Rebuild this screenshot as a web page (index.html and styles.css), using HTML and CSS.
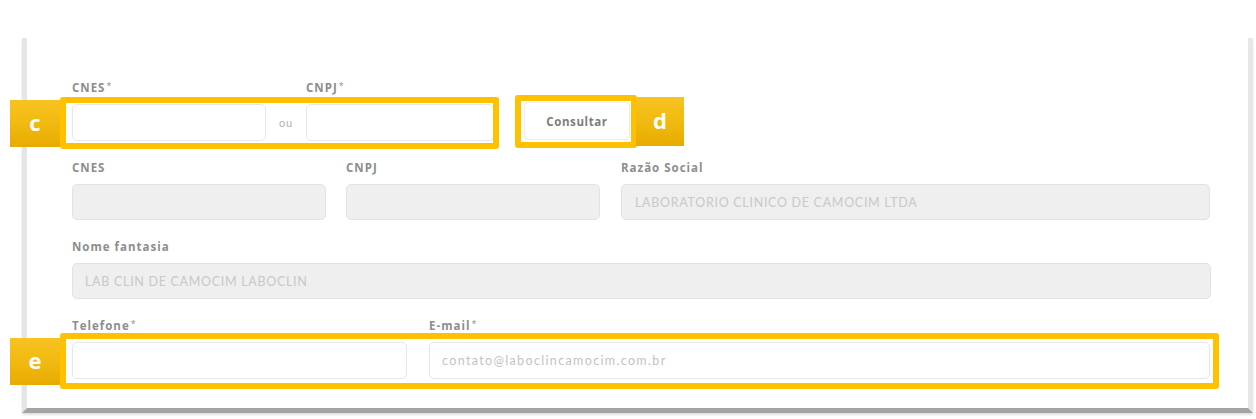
FILE: index.html
```html
<!DOCTYPE html>
<html lang="pt-BR">
<head>
<meta charset="utf-8">
<title>Cadastro</title>
<link rel="stylesheet" href="styles.css">
</head>
<body>
<div class="page">
  <div class="card">
    <div class="row row-search">
      <div class="field f-cnes1">
        <label class="label">CNES<sup class="req">*</sup></label>
        <div class="input"></div>
      </div>
      <span class="ou">ou</span>
      <div class="field f-cnpj1">
        <label class="label">CNPJ<sup class="req">*</sup></label>
        <div class="input"></div>
      </div>
      <button class="btn">Consultar</button>
    </div>
    <div class="row row-three">
      <div class="field">
        <label class="label">CNES</label>
        <div class="input disabled"></div>
      </div>
      <div class="field">
        <label class="label">CNPJ</label>
        <div class="input disabled"></div>
      </div>
      <div class="field">
        <label class="label">Razão Social</label>
        <div class="input disabled"><span class="value">LABORATORIO CLINICO DE CAMOCIM LTDA</span></div>
      </div>
    </div>
    <div class="row">
      <div class="field full">
        <label class="label">Nome fantasia</label>
        <div class="input disabled"><span class="value">LAB CLIN DE CAMOCIM LABOCLIN</span></div>
      </div>
    </div>
    <div class="row row-contact">
      <div class="field">
        <label class="label">Telefone<sup class="req">*</sup></label>
        <div class="input"></div>
      </div>
      <div class="field">
        <label class="label">E-mail<sup class="req">*</sup></label>
        <div class="input"><span class="placeholder">contato@laboclincamocim.com.br</span></div>
      </div>
    </div>
  </div>

  <div class="callout box-c"></div>
  <div class="tag tag-c">c</div>
  <div class="callout box-d"></div>
  <div class="tag tag-d">d</div>
  <div class="callout box-e"></div>
  <div class="tag tag-e">e</div>
</div>
</body>
</html>
```

FILE: styles.css
```css
html, body {
  margin: 0;
  padding: 0;
  background: #ffffff;
}
body {
  font-family: "Lato", "Open Sans", sans-serif;
  width: 1256px;
  height: 419px;
  overflow: hidden;
}
.page {
  position: relative;
  width: 1256px;
  height: 419px;
  padding-top: 38px;
  box-sizing: border-box;
}
.card {
  margin-left: 22px;
  width: 1231px;
  height: 375px;
  box-sizing: border-box;
  background: #ffffff;
  border-left: 5px solid #e3e6e6;
  border-right: 5px solid #e6e8e8;
  border-bottom: 5px solid #a4a4a4;
  box-shadow: 0 2px 2px rgba(0,0,0,0.12);
  padding: 43px 0 0 45px;
}
.row {
  display: flex;
  width: 1139px;
  margin-bottom: 20px;
}
.field {
  display: flex;
  flex-direction: column;
}
.label {
  font-family: "Open Sans", "Lato", sans-serif;
  font-size: 11.5px;
  font-weight: 700;
  color: #8d8d8d;
  line-height: 14px;
  height: 14px;
  margin-bottom: 9px;
  letter-spacing: 1px;
}
.req {
  font-size: 9px;
  font-weight: 400;
  vertical-align: top;
  line-height: 10px;
  letter-spacing: 0;
  margin-left: 1px;
}
.input {
  height: 36px;
  box-sizing: border-box;
  border: 1px solid #e6e6e6;
  border-radius: 5px;
  background: #ffffff;
  display: flex;
  align-items: center;
  padding-left: 12px;
}
.input.disabled {
  background: #efefef;
  border-color: #e2e2e2;
}
.value, .placeholder {
  font-size: 12.5px;
  color: #c8c8c8;
  letter-spacing: 0.7px;
}
.placeholder {
  color: #c2c2c2;
  letter-spacing: 1.35px;
}
.row-search {
  align-items: flex-start;
}
.row-search .input {
  height: 37px;
}
.f-cnes1 { width: 194px; }
.f-cnpj1 { width: 188px; }
.ou {
  width: 40px;
  margin-top: 23px;
  height: 37px;
  line-height: 37px;
  text-align: center;
  font-size: 11px;
  color: #b3b3b3;
  letter-spacing: 0.8px;
}
.btn {
  margin-top: 21px;
  margin-left: 30px;
  width: 106px;
  height: 38px;
  border: 1px solid #ececec;
  background: #ffffff;
  border-radius: 4px;
  font-family: "Open Sans", "Lato", sans-serif;
  font-size: 11.5px;
  font-weight: 700;
  color: #7d7d7d;
  letter-spacing: 0.6px;
  padding: 0;
}
.row-three {
  display: grid;
  grid-template-columns: 254px 254px 590px;
  column-gap: 20px;
}
.row-three .field:nth-child(3) { margin-left: 1px; }
.row-three .input.disabled { padding-left: 13px; }
.full { width: 1139px; }
.row-contact {
  display: grid;
  grid-template-columns: 335px 781px;
  column-gap: 22px;
}
.row-contact .input { height: 37px; }

/* annotation overlays */
.callout {
  position: absolute;
  box-sizing: border-box;
  border: 6px solid #ffc000;
  border-radius: 3px;
}
.box-c { left: 60px; top: 97px; width: 439px; height: 52px; }
.box-d { left: 515px; top: 95px; width: 122px; height: 53px; }
.box-e { left: 60px; top: 333px; width: 1159px; height: 56px; }
.tag {
  position: absolute;
  box-sizing: border-box;
  background: linear-gradient(180deg, #f7c322 0%, #f2bb12 45%, #e8ab00 100%);
  color: #ffffff;
  font-family: "Open Sans", "DejaVu Sans", sans-serif;
  font-weight: 700;
  font-size: 22px;
  line-height: 1;
  display: flex;
  align-items: center;
  justify-content: center;
  padding-bottom: 3px;
}
.tag-c { left: 10px; top: 100px; width: 50px; height: 47px; }
.tag-d { left: 636px; top: 97px; width: 48px; height: 49px; }
.tag-e { left: 10px; top: 338px; width: 50px; height: 47px; }
```
